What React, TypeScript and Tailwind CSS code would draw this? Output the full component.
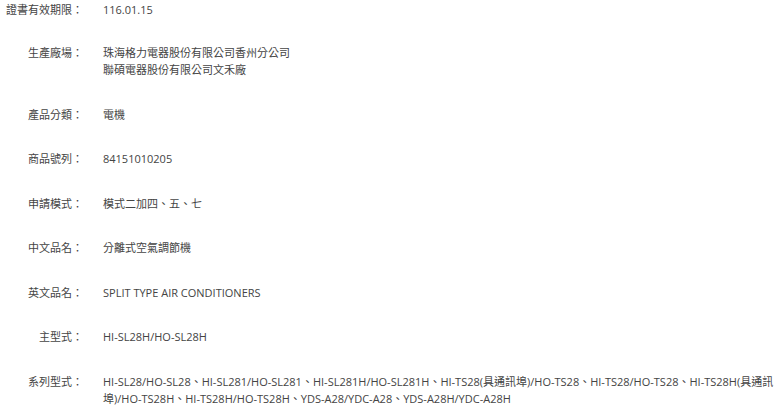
import React from "react";

const rows: { label: string; value: React.ReactNode }[] = [
  { label: "證書有效期限：", value: "116.01.15" },
  {
    label: "生產廠場：",
    value: (
      <>
        珠海格力電器股份有限公司香州分公司
        <br />
        聯碩電器股份有限公司文禾廠
      </>
    ),
  },
  { label: "產品分類：", value: "電機" },
  { label: "商品號列：", value: "84151010205" },
  { label: "申請模式：", value: "模式二加四、五、七" },
  { label: "中文品名：", value: "分離式空氣調節機" },
  { label: "英文品名：", value: "SPLIT TYPE AIR CONDITIONERS" },
  { label: "主型式：", value: "HI-SL28H/HO-SL28H" },
  {
    label: "系列型式：",
    value:
      "HI-SL28/HO-SL28、HI-SL281/HO-SL281、HI-SL281H/HO-SL281H、HI-TS28(具通訊埠)/HO-TS28、HI-TS28/HO-TS28、HI-TS28H(具通訊埠)/HO-TS28H、HI-TS28H/HO-TS28H、YDS-A28/YDC-A28、YDS-A28H/YDC-A28H",
  },
];

export default function App() {
  return (
    <div
      className="w-[780px] h-[409px] overflow-hidden bg-white text-[#444] text-[11px] leading-[17px]"
      style={{ fontFamily: '"Open Sans", "Noto Sans CJK TC", sans-serif' }}
    >
      <div className="flex flex-col gap-[27.5px] pt-px">
        {rows.map((r, i) => (
          <div key={r.label} className={i === 0 ? "flex -mb-[1.5px]" : "flex"}>
            <div className="w-[83px] shrink-0 text-right">{r.label}</div>
            <div className="pl-[20px] pr-[4px] flex-1 min-w-0">{r.value}</div>
          </div>
        ))}
      </div>
    </div>
  );
}
